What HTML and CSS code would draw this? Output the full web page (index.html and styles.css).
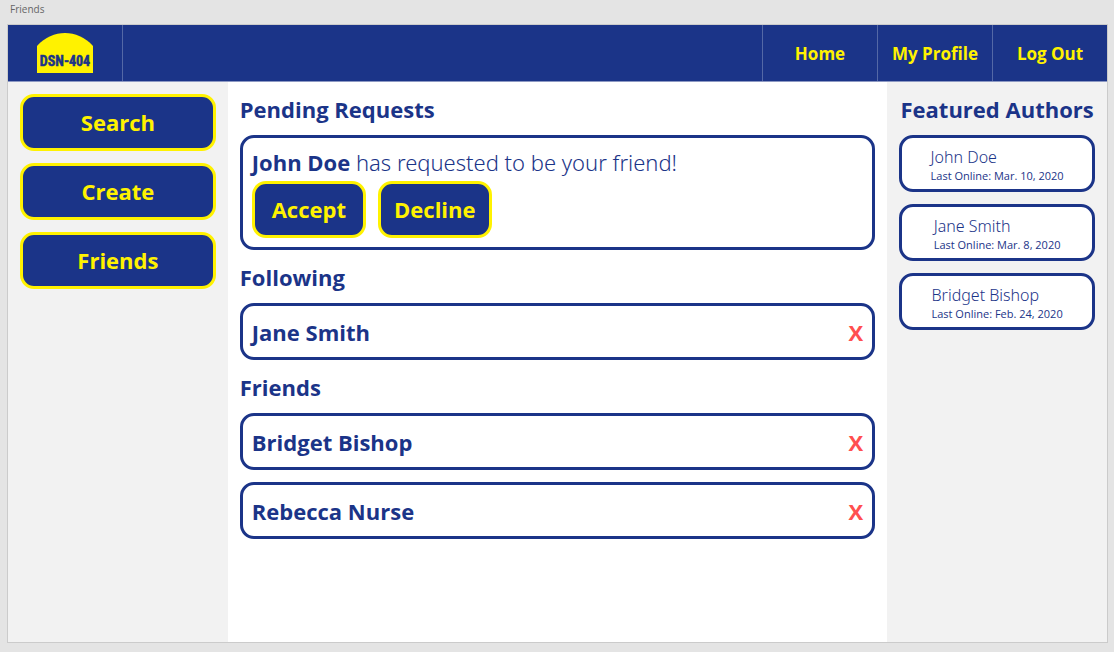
FILE: index.html
```html
<!DOCTYPE html>
<html lang="en">
<head>
<meta charset="utf-8">
<meta name="viewport" content="width=device-width, initial-scale=1">
<title>Friends</title>
<link rel="stylesheet" href="styles.css">
</head>
<body>
<p class="artboard-label">Friends</p>
<div class="artboard">
  <header class="topbar">
    <a class="brand" href="#" aria-label="DSN-404">
      <svg class="logo" viewBox="0 0 56 40" width="56" height="40">
        <path d="M0 13C8 4 18 0 28 0s20 4 28 13v27H0Z" fill="#fff200"/>
        <text class="logo-text" x="28" y="33" text-anchor="middle">DSN-404</text>
      </svg>
    </a>
    <nav class="topnav">
      <a class="topnav-link" href="#">Home</a>
      <a class="topnav-link" href="#">My Profile</a>
      <a class="topnav-link" href="#">Log Out</a>
    </nav>
  </header>
  <div class="columns">
    <aside class="sidebar menu">
      <button class="button" type="button">Search</button>
      <button class="button" type="button">Create</button>
      <button class="button" type="button">Friends</button>
    </aside>
    <main class="content">
      <section class="group">
        <h2 class="heading">Pending Requests</h2>
        <div class="card request">
          <p class="request-text"><strong>John Doe</strong> has requested to be your friend!</p>
          <div class="actions">
            <button class="button action" type="button">Accept</button>
            <button class="button action" type="button">Decline</button>
          </div>
        </div>
      </section>
      <section class="group">
        <h2 class="heading">Following</h2>
        <div class="card person">
          <span>Jane Smith</span>
          <button class="remove" type="button" aria-label="Unfollow Jane Smith">X</button>
        </div>
      </section>
      <section class="group">
        <h2 class="heading">Friends</h2>
        <div class="card person">
          <span>Bridget Bishop</span>
          <button class="remove" type="button" aria-label="Remove Bridget Bishop">X</button>
        </div>
        <div class="card person">
          <span>Rebecca Nurse</span>
          <button class="remove" type="button" aria-label="Remove Rebecca Nurse">X</button>
        </div>
      </section>
    </main>
    <aside class="sidebar group">
      <h2 class="heading featured">Featured Authors</h2>
      <div class="card author">
        <div><p class="author-name">John Doe</p><p class="author-seen">Last Online: Mar. 10, 2020</p></div>
      </div>
      <div class="card author">
        <div><p class="author-name">Jane Smith</p><p class="author-seen">Last Online: Mar. 8, 2020</p></div>
      </div>
      <div class="card author">
        <div><p class="author-name">Bridget Bishop</p><p class="author-seen">Last Online: Feb. 24, 2020</p></div>
      </div>
    </aside>
  </div>
</div>
</body>
</html>
```
FILE: styles.css
```css
:root {
  --blue: #1b3488;
  --yellow: #fff200;
  --red: #ff4f4f;
}

* {
  box-sizing: border-box;
}

body {
  display: flex;
  flex-direction: column;
  min-height: 100vh;
  margin: 0;
  padding: 0 6px 9px 7px;
  background: #e4e4e4;
  color: var(--blue);
  font-family: "Open Sans", "Noto Sans", sans-serif;
}

p,
h2 {
  margin: 0;
}

.artboard-label {
  padding: 1px 3px 7px;
  color: #666;
  font-size: 10px;
  line-height: 16px;
}

.artboard {
  display: flex;
  flex: 1;
  flex-direction: column;
  border: 1px solid #cbcbcb;
  background: #fff;
}

.topbar {
  display: flex;
  justify-content: space-between;
  height: 57px;
  border-bottom: 1px solid #8d99c3;
  background: var(--blue);
}

.brand {
  display: flex;
  align-items: center;
  justify-content: center;
  width: 115px;
  border-right: 1px solid #5468a6;
}

.logo-text {
  fill: var(--blue);
  stroke: var(--blue);
  stroke-width: 0.5px;
  font-family: "Liberation Sans Narrow", "Roboto Condensed", "Liberation Sans", sans-serif;
  font-size: 14px;
  font-weight: 700;
}

.topnav {
  display: flex;
}

.topnav-link {
  display: flex;
  align-items: center;
  justify-content: center;
  width: 115px;
  border-left: 1px solid #5468a6;
  color: var(--yellow);
  font-size: 17px;
  font-weight: 700;
  text-decoration: none;
}

.columns {
  display: grid;
  flex: 1;
  grid-template-columns: minmax(0, 1fr) minmax(0, 3fr) minmax(0, 1fr);
}

.sidebar,
.content {
  padding: 12px;
}

.sidebar {
  background: #f2f2f2;
}

.menu,
.content {
  display: flex;
  flex-direction: column;
  gap: 12px;
}

.group {
  display: flex;
  flex-direction: column;
  gap: 12px;
}

.heading {
  margin-bottom: -1px;
  font-size: 22px;
  font-weight: 700;
  line-height: 30px;
}

.featured {
  text-align: center;
  white-space: nowrap;
}

.button {
  height: 57px;
  padding: 0 0 2px;
  border: 3px solid var(--yellow);
  border-radius: 14px;
  background: var(--blue);
  color: var(--yellow);
  font-family: inherit;
  font-size: 22px;
  font-weight: 700;
}

.card {
  min-height: 57px;
  border: 3px solid var(--blue);
  border-radius: 14px;
  background: #fff;
}

.request {
  padding: 8px 9px 9px;
  font-size: 22px;
}

.request-text {
  margin-bottom: 3px;
  font-family: "Noto Sans", "Open Sans", sans-serif;
  font-weight: 300;
  line-height: 32px;
}

.request-text strong {
  font-family: "Open Sans", "Noto Sans", sans-serif;
  font-weight: 700;
}

.actions {
  display: flex;
  gap: 12px;
}

.action {
  width: 114px;
}

.person {
  display: flex;
  align-items: center;
  justify-content: space-between;
  padding: 0 9px;
  font-size: 22px;
  font-weight: 700;
}

.remove {
  padding: 0;
  border: 0;
  background: none;
  color: var(--red);
  font: inherit;
}

.author {
  display: flex;
  align-items: center;
  justify-content: center;
  padding-top: 3px;
}

.author-name {
  font-family: "Noto Sans", "Open Sans", sans-serif;
  font-size: 16px;
  font-weight: 300;
  line-height: 20px;
}

.author-seen {
  font-size: 11px;
  font-weight: 400;
  line-height: 17px;
}
```
